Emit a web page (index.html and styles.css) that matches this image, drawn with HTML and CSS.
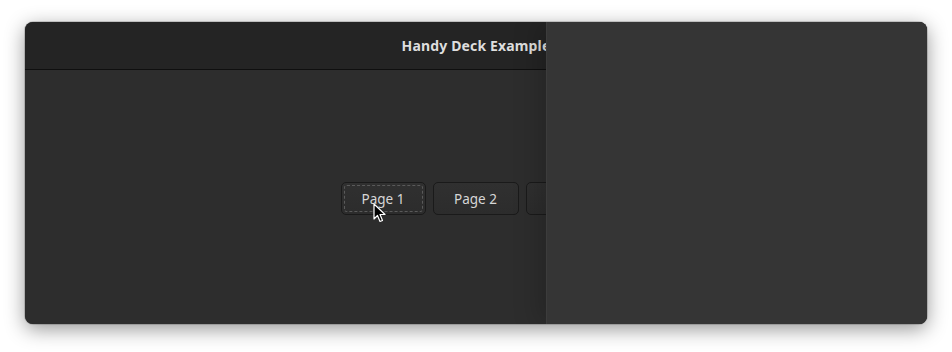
FILE: index.html
```html
<!DOCTYPE html>
<html>
<head>
<meta charset="utf-8">
<link rel="stylesheet" href="styles.css">
</head>
<body>
<div class="window">
  <div class="main">
    <div class="header"><span class="title">Handy Deck Example</span></div>
    <div class="content">
      <div class="buttons">
        <button class="btn focus">Page 1</button>
        <button class="btn">Page 2</button>
        <button class="btn">Page 3</button>
      </div>
    </div>
  </div>
  <div class="panel"></div>
  <svg class="cursor" width="14" height="20" viewBox="0 0 14 20">
    <path d="M1 1 L1 16 L4.5 12.5 L7 18.5 L9.5 17.5 L7 11.5 L12 11.5 Z" fill="#000" stroke="#fff" stroke-width="1.2" stroke-linejoin="round"/>
  </svg>
</div>
</body>
</html>
```
FILE: styles.css
```css
html, body {
  margin: 0;
  padding: 0;
  background: #ffffff;
}
body {
  box-sizing: border-box;
  min-height: 352px;
  padding: 22px 0 0 25px;
  font-family: "Noto Sans", "Open Sans", sans-serif;
  overflow: hidden;
}
.window {
  position: relative;
  width: 902px;
  height: 302px;
  border-radius: 8px;
  overflow: hidden;
  box-shadow: 0 5px 20px rgba(0,0,0,0.42), 0 0 0 1px rgba(0,0,0,0.15);
  background: #2d2d2d;
}
.main {
  display: flex;
  flex-direction: column;
  height: 100%;
}
.header {
  height: 47px;
  background: #242424;
  border-bottom: 1px solid #0f0f0f;
  display: flex;
  align-items: center;
  justify-content: center;
}
.title {
  color: #dedede;
  font-weight: bold;
  font-size: 14px;
  letter-spacing: 0.15px;
}
.content {
  flex: 1;
  display: flex;
  align-items: center;
  justify-content: center;
  background: #2d2d2d;
}
.buttons {
  display: flex;
  gap: 7px;
  margin-top: 3px;
}
.btn {
  width: 86px;
  height: 33px;
  border: 1px solid #1a1a1a;
  border-radius: 5px;
  background: linear-gradient(#303030, #2c2c2c);
  color: #d6d6d6;
  font-family: "Noto Sans", "Open Sans", sans-serif;
  font-size: 13.5px;
  padding: 0;
  position: relative;
}
.btn.focus {
  width: 85px;
}
.btn.focus::after {
  content: "";
  position: absolute;
  inset: 2px;
  border: 1px dashed #5a5a5a;
  border-radius: 3px;
}
.panel {
  position: absolute;
  top: 0;
  bottom: 0;
  left: 521px;
  right: 0;
  background: #353535;
  border-left: 1px solid #3c3c3c;
  box-shadow: -8px 0 24px rgba(0,0,0,0.18);
}
.cursor {
  position: absolute;
  left: 348px;
  top: 181px;
}
```
